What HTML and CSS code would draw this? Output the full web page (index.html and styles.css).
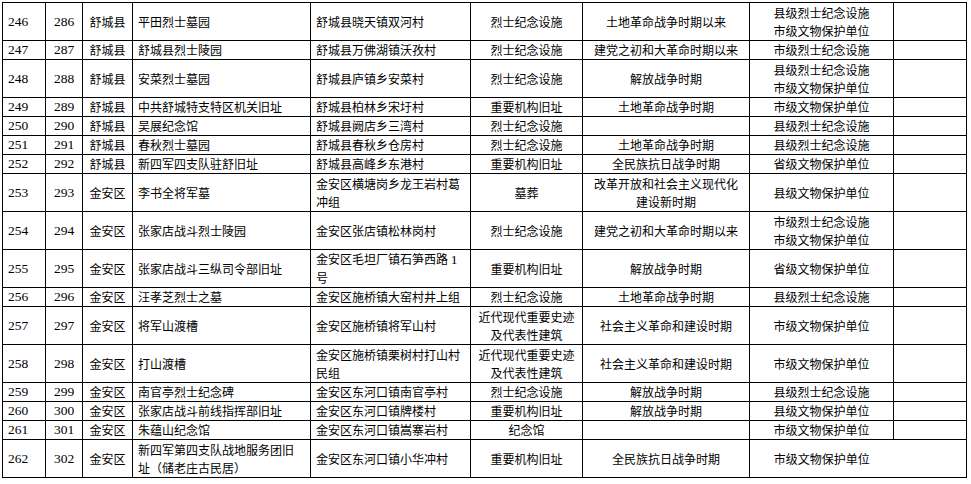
FILE: index.html
```html
<!DOCTYPE html>
<html lang="zh-CN">
<head>
<meta charset="utf-8">
<title>名录</title>
<link rel="stylesheet" href="styles.css">
</head>
<body>
<table class="list">
  <colgroup>
    <col class="c1"><col class="c2"><col class="c3"><col class="c4"><col class="c5"><col class="c6"><col class="c7"><col class="c8"><col class="c9">
  </colgroup>
  <tbody>
    <tr class="r2"><td class="n l">246</td><td class="n c">286</td><td class="c">舒城县</td><td class="l">平田烈士墓园</td><td class="l">舒城县晓天镇双河村</td><td class="c">烈士纪念设施</td><td class="c">土地革命战争时期以来</td><td class="c">县级烈士纪念设施<br>市级文物保护单位</td><td></td></tr>
    <tr class="r1"><td class="n l">247</td><td class="n c">287</td><td class="c">舒城县</td><td class="l">舒城县烈士陵园</td><td class="l">舒城县万佛湖镇沃孜村</td><td class="c">烈士纪念设施</td><td class="c">建党之初和大革命时期以来</td><td class="c">市级烈士纪念设施</td><td></td></tr>
    <tr class="r2"><td class="n l">248</td><td class="n c">288</td><td class="c">舒城县</td><td class="l">安菜烈士墓园</td><td class="l">舒城县庐镇乡安菜村</td><td class="c">烈士纪念设施</td><td class="c">解放战争时期</td><td class="c">县级烈士纪念设施<br>市级文物保护单位</td><td></td></tr>
    <tr class="r1"><td class="n l">249</td><td class="n c">289</td><td class="c">舒城县</td><td class="l">中共舒城特支特区机关旧址</td><td class="l">舒城县柏林乡宋圩村</td><td class="c">重要机构旧址</td><td class="c">土地革命战争时期</td><td class="c">市级文物保护单位</td><td></td></tr>
    <tr class="r1"><td class="n l">250</td><td class="n c">290</td><td class="c">舒城县</td><td class="l">吴展纪念馆</td><td class="l">舒城县阙店乡三湾村</td><td class="c">烈士纪念设施</td><td class="c"></td><td class="c">县级烈士纪念设施</td><td></td></tr>
    <tr class="r1"><td class="n l">251</td><td class="n c">291</td><td class="c">舒城县</td><td class="l">春秋烈士墓园</td><td class="l">舒城县春秋乡仓房村</td><td class="c">烈士纪念设施</td><td class="c">土地革命战争时期</td><td class="c">县级烈士纪念设施</td><td></td></tr>
    <tr class="r1"><td class="n l">252</td><td class="n c">292</td><td class="c">舒城县</td><td class="l">新四军四支队驻舒旧址</td><td class="l">舒城县高峰乡东港村</td><td class="c">重要机构旧址</td><td class="c">全民族抗日战争时期</td><td class="c">省级文物保护单位</td><td></td></tr>
    <tr class="r2"><td class="n l">253</td><td class="n c">293</td><td class="c">金安区</td><td class="l">李书全将军墓</td><td class="l">金安区横塘岗乡龙王岩村葛<br>冲组</td><td class="c">墓葬</td><td class="c">改革开放和社会主义现代化<br>建设新时期</td><td class="c">县级文物保护单位</td><td></td></tr>
    <tr class="r2"><td class="n l">254</td><td class="n c">294</td><td class="c">金安区</td><td class="l">张家店战斗烈士陵园</td><td class="l">金安区张店镇松林岗村</td><td class="c">烈士纪念设施</td><td class="c">建党之初和大革命时期以来</td><td class="c">市级烈士纪念设施<br>市级文物保护单位</td><td></td></tr>
    <tr class="r2"><td class="n l">255</td><td class="n c">295</td><td class="c">金安区</td><td class="l">张家店战斗三纵司令部旧址</td><td class="l">金安区毛坦厂镇石笋西路 <span class="n">1</span><br>号</td><td class="c">重要机构旧址</td><td class="c">解放战争时期</td><td class="c">省级文物保护单位</td><td></td></tr>
    <tr class="r1"><td class="n l">256</td><td class="n c">296</td><td class="c">金安区</td><td class="l">汪孝芝烈士之墓</td><td class="l">金安区施桥镇大窑村井上组</td><td class="c">烈士纪念设施</td><td class="c">土地革命战争时期</td><td class="c">县级烈士纪念设施</td><td></td></tr>
    <tr class="r2"><td class="n l">257</td><td class="n c">297</td><td class="c">金安区</td><td class="l">将军山渡槽</td><td class="l">金安区施桥镇将军山村</td><td class="c">近代现代重要史迹<br>及代表性建筑</td><td class="c">社会主义革命和建设时期</td><td class="c">市级文物保护单位</td><td></td></tr>
    <tr class="r2"><td class="n l">258</td><td class="n c">298</td><td class="c">金安区</td><td class="l">打山渡槽</td><td class="l">金安区施桥镇栗树村打山村<br>民组</td><td class="c">近代现代重要史迹<br>及代表性建筑</td><td class="c">社会主义革命和建设时期</td><td class="c">市级文物保护单位</td><td></td></tr>
    <tr class="r1"><td class="n l">259</td><td class="n c">299</td><td class="c">金安区</td><td class="l">南官亭烈士纪念碑</td><td class="l">金安区东河口镇南官亭村</td><td class="c">烈士纪念设施</td><td class="c">解放战争时期</td><td class="c">县级烈士纪念设施</td><td></td></tr>
    <tr class="r1"><td class="n l">260</td><td class="n c">300</td><td class="c">金安区</td><td class="l">张家店战斗前线指挥部旧址</td><td class="l">金安区东河口镇牌楼村</td><td class="c">重要机构旧址</td><td class="c">解放战争时期</td><td class="c">县级文物保护单位</td><td></td></tr>
    <tr class="r1"><td class="n l">261</td><td class="n c">301</td><td class="c">金安区</td><td class="l">朱蕴山纪念馆</td><td class="l">金安区东河口镇嵩寨岩村</td><td class="c">纪念馆</td><td class="c"></td><td class="c">市级文物保护单位</td><td></td></tr>
    <tr class="r2"><td class="n l">262</td><td class="n c">302</td><td class="c">金安区</td><td class="l">新四军第四支队战地服务团旧<br>址（储老庄古民居）</td><td class="l">金安区东河口镇小华冲村</td><td class="c">重要机构旧址</td><td class="c">全民族抗日战争时期</td><td class="c">市级文物保护单位</td><td class="open"></td></tr>
  </tbody>
</table>
</body>
</html>
```

FILE: styles.css
```css
html, body {
  margin: 0;
  padding: 0;
  background: #fff;
}

.list {
  border-collapse: collapse;
  table-layout: fixed;
  width: 964px;
  margin: 2px 0 0 2px;
  font-family: "Noto Sans CJK SC", "Noto Sans CJK TC", sans-serif;
  font-size: 12px;
  line-height: 18px;
  color: #000;
}

.c1 { width: 43px; }
.c2 { width: 37px; }
.c3 { width: 50px; }
.c4 { width: 178px; }
.c5 { width: 160px; }
.c6 { width: 112px; }
.c7 { width: 167px; }
.c8 { width: 144px; }
.c9 { width: 73px; }

.list td {
  border: 1px solid #000;
  padding: 0;
  vertical-align: middle;
  white-space: nowrap;
  overflow: hidden;
}

.r1 { height: 19px; }
.r2 { height: 38px; }

.list td.l {
  text-align: left;
  padding-left: 5px;
}

.list td.c {
  text-align: center;
}

.n {
  font-family: "Liberation Serif", "Times New Roman", serif;
  font-size: 13.5px;
}

.list td.open {
  border-left-style: hidden;
  position: relative;
}

.list td.open::before {
  content: "";
  position: absolute;
  left: -1px;
  top: 0;
  width: 1px;
  height: 7px;
  background: #000;
}
```
